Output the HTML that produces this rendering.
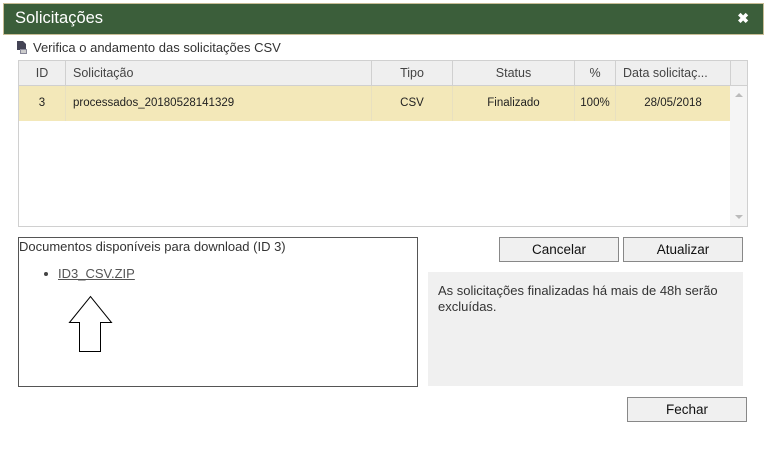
<!DOCTYPE html>
<html><head><meta charset="utf-8"><style>
*{box-sizing:border-box;margin:0;padding:0}
body{width:764px;height:450px;background:#fff;font-family:"Liberation Sans",sans-serif;font-size:13px;color:#222;position:relative;overflow:hidden}
.a{position:absolute}
.title{left:3px;top:3px;width:761px;height:32px;background:#3b5e3a;border:1px solid #c8bd95;color:#fff;font-size:16.5px;line-height:29px;padding-left:11px}
.x{right:14px;top:0;font-size:14px;font-weight:bold}
.tbl{left:18px;top:60px;width:730px;height:167px;border:1px solid #d0d0d0}
.hd{top:0;left:0;height:25px;width:728px;background:#efefef;border-bottom:1px solid #d0d0d0;font-size:12.5px}
.c{position:absolute;top:0;height:100%;line-height:25px;border-right:1px solid #d0d0d0;color:#444}
.row{top:25px;left:0;width:711px;height:35px;background:#f3e8b9}
.row .c{line-height:34px;border-right:1px solid #e8e0c0;color:#222;font-size:11.5px}
.btn{height:25px;background:#f0f0f0;border:1px solid #888;text-align:center;line-height:23px;font-size:13.5px;color:#111}
</style></head><body>
<div class="a title">Solicitações<span class="a x">✖</span></div>
<div class="a" style="left:16px;top:41px;width:11px;height:13px">
<svg width="11" height="13"><path d="M1 0h6l3 3v6H1z" fill="#445"/><rect x="4" y="8" width="7" height="5" fill="#889"/><rect x="5" y="9" width="5" height="3" fill="#ccc"/></svg></div>
<div class="a" style="left:33px;top:40px;font-size:13px;color:#333">Verifica o andamento das solicitações CSV</div>
<div class="a tbl">
 <div class="a hd">
  <div class="c" style="left:0;width:47px;text-align:center">ID</div>
  <div class="c" style="left:47px;width:306px;padding-left:7px">Solicitação</div>
  <div class="c" style="left:353px;width:81px;text-align:center">Tipo</div>
  <div class="c" style="left:434px;width:122px;text-align:center">Status</div>
  <div class="c" style="left:556px;width:41px;text-align:center">%</div>
  <div class="c" style="left:597px;width:115px;padding-left:7px">Data solicitaç...</div>
 </div>
 <div class="a row">
  <div class="c" style="left:0;width:47px;text-align:center">3</div>
  <div class="c" style="left:47px;width:306px;padding-left:7px">processados_20180528141329</div>
  <div class="c" style="left:353px;width:81px;text-align:center">CSV</div>
  <div class="c" style="left:434px;width:122px;text-align:center">Finalizado</div>
  <div class="c" style="left:556px;width:41px;text-align:center">100%</div>
  <div class="c" style="left:597px;width:114px;text-align:center;border:none">28/05/2018</div>
 </div>
 <div class="a" style="left:711px;top:25px;width:17px;height:140px;background:#f5f5f5"></div>
 <div class="a" style="left:716px;top:32px;width:0;height:0;border:4px solid transparent;border-bottom:4px solid #bbb;border-top:0"></div>
 <div class="a" style="left:716px;top:154px;width:0;height:0;border:4px solid transparent;border-top:4px solid #bbb;border-bottom:0"></div>
</div>
<div class="a" style="left:18px;top:237px;width:400px;height:150px;border:1px solid #555">
 <div class="a" style="left:0;top:1px;color:#333">Documentos disponíveis para download (ID 3)</div>
 <div class="a" style="left:25px;top:34px;width:4px;height:4px;border-radius:2px;background:#444"></div>
 <div class="a" style="left:39px;top:28px;color:#555;text-decoration:underline">ID3_CSV.ZIP</div>
 <svg class="a" style="left:49px;top:57px" width="46" height="60"><path d="M1.5 27.5L22.5 1.5L43.5 27.5H32.5V56.5H11.5V27.5Z" fill="#fff" stroke="#000"/></svg>
</div>
<div class="a btn" style="left:499px;top:237px;width:120px">Cancelar</div>
<div class="a btn" style="left:623px;top:237px;width:120px">Atualizar</div>
<div class="a" style="left:428px;top:272px;width:315px;height:114px;background:#f0f0f0;padding:11px 10px;line-height:16px;color:#333">As solicitações finalizadas há mais de 48h serão excluídas.</div>
<div class="a btn" style="left:627px;top:397px;width:120px">Fechar</div>
</body></html>
